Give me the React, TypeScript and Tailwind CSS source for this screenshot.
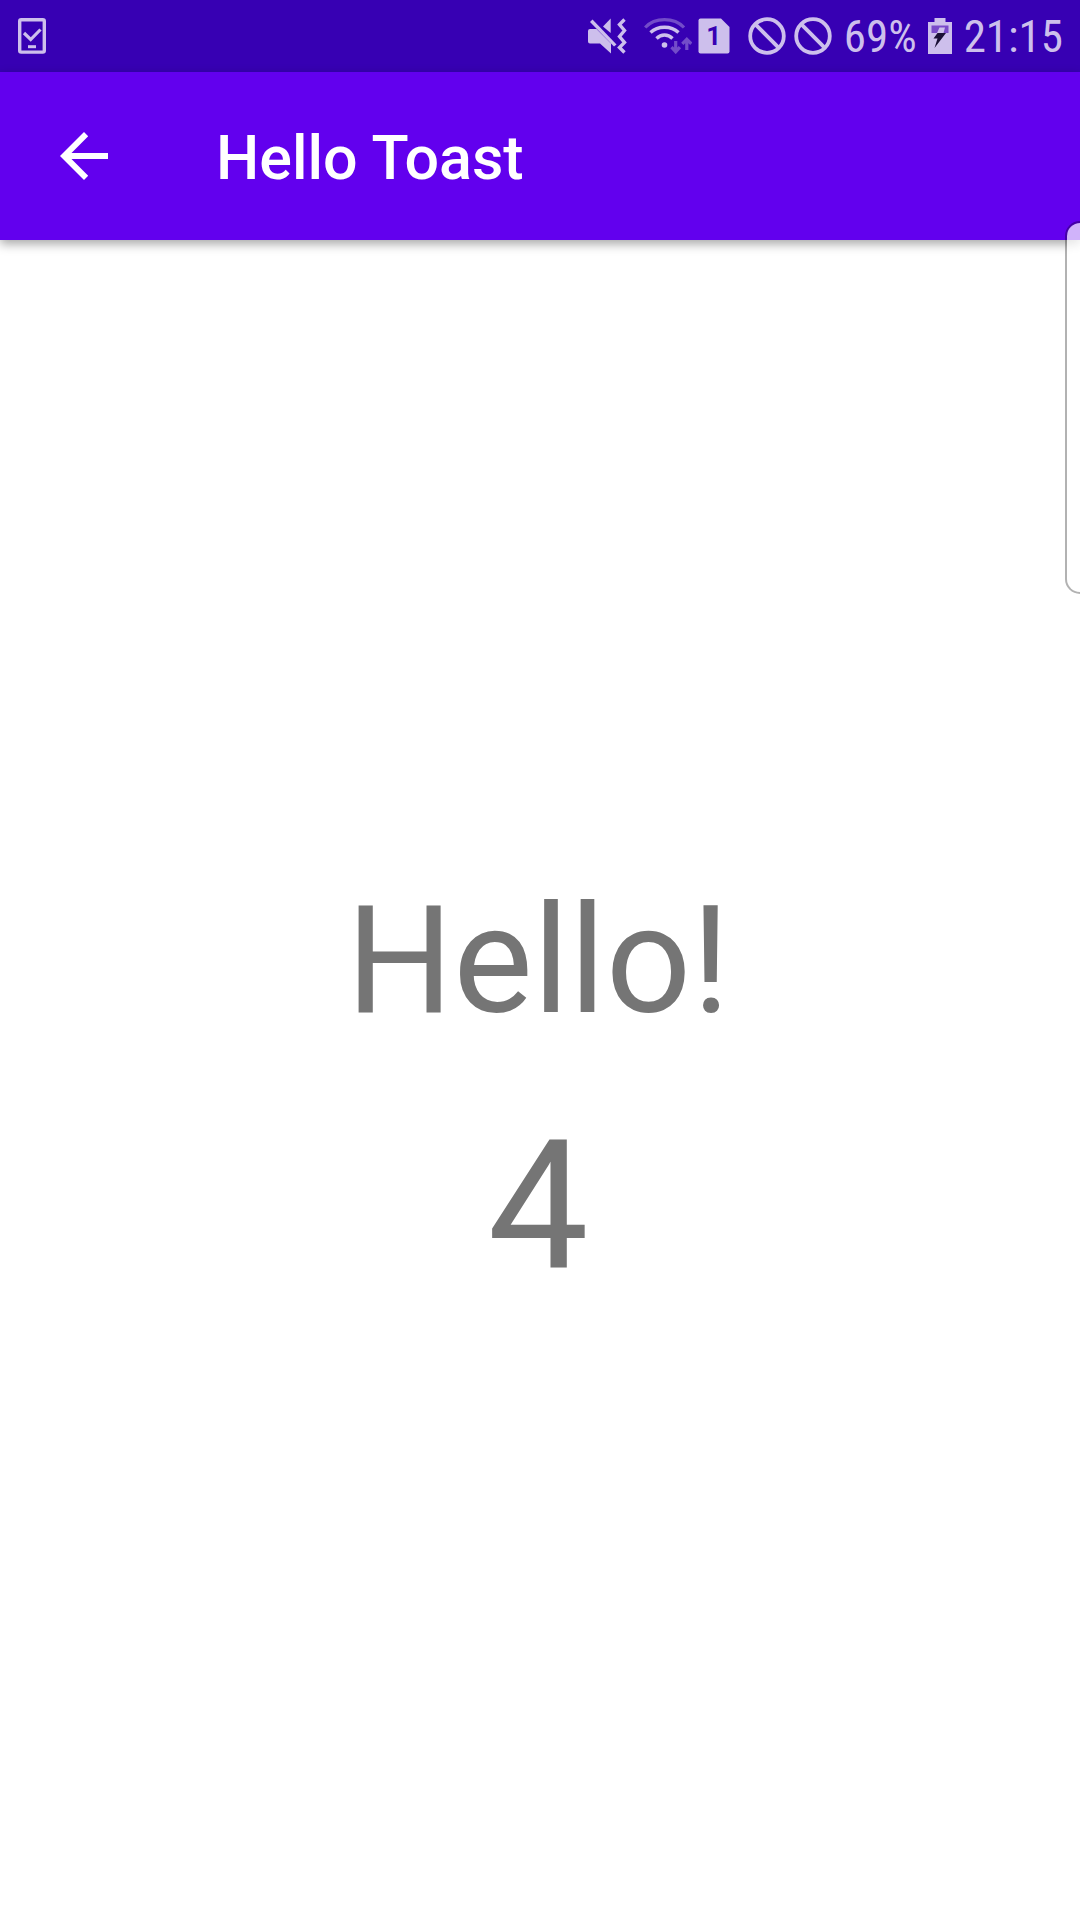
import React from "react";

function TaskIcon() {
  return (
    <svg className="h-9 w-7" viewBox="0 0 28 36" fill="none" stroke="currentColor" aria-hidden="true">
      <rect x="1.7" y="1.7" width="24.6" height="32.4" rx="1.5" strokeWidth="3.4" />
      <path d="M6 15l6.700 6.500L22.500 11.500" strokeWidth="3.2" />
      <path d="M10 28.7h8" strokeWidth="3" />
    </svg>
  );
}

function MuteIcon() {
  return (
    <svg className="h-9 w-10" viewBox="0 0 40 36" aria-hidden="true">
      <g fill="currentColor">
        <path d="M2 11H8.500L23 25.500V35.500L12 25.500H2Q0 25.500 0 23.500V13Q0 11 2 11Z" />
        <path d="M15 8.500L22.700 0.500V15Z" />
        <path d="M4.500 1.500L28.500 26.500L26 28.500L2 4Z" />
      </g>
      <path d="M36.500 1.500L31.500 6.500l5 6-5 6 5 6-5 5 5 5" fill="none" stroke="currentColor" strokeWidth="3.400" />
    </svg>
  );
}

function WifiIcon() {
  return (
    <svg className="h-9 w-12" viewBox="0 0 48 36" fill="none" stroke="currentColor" aria-hidden="true">
      <path d="M1.200 9.500Q8.500 1.700 20.500 1.700T40 9.500" strokeWidth="3.200" opacity="0.4" />
      <path d="M6.500 14.500Q12 9.300 20.500 9.300T34.500 14.500" strokeWidth="3.400" />
      <path d="M12.500 20.500Q16 17 20.500 17T28.500 20.500" strokeWidth="3.400" />
      <circle cx="20.500" cy="27" r="2.800" fill="currentColor" stroke="none" />
      <g strokeWidth="3.200" opacity="0.4">
        <path d="M31.700 23v10.500M27.500 29.200l4.200 4.600 4.200-4.600" />
        <path d="M42.800 32V21.500M38.300 25.800l4.500-4.600 4.500 4.600" />
      </g>
    </svg>
  );
}

function SimIcon() {
  return (
    <span className="relative flex h-9 w-8 items-center justify-center">
      <svg className="h-9 w-8" viewBox="0 0 32 36" aria-hidden="true">
        <path d="M2.500 0.500H23L31.500 9V33.500Q31.500 35.500 29.500 35.500H2.500Q0.500 35.500 0.500 33.500V2.500Q0.500 0.500 2.500 0.500Z" fill="currentColor" />
      </svg>
      <span className="absolute inset-0 text-center text-[26px] leading-9 font-bold text-[#3700b3]">1</span>
    </span>
  );
}

function BlockedIcon() {
  return (
    <svg className="h-[38px] w-[38px]" viewBox="0 0 38 38" fill="none" stroke="currentColor" strokeWidth="3.800" aria-hidden="true">
      <circle cx="19" cy="19" r="16.800" />
      <path d="M7.200 7.200l23.600 23.600" />
    </svg>
  );
}

function BatteryIcon() {
  return (
    <svg className="h-9 w-6" viewBox="0 0 24 36" aria-hidden="true">
      <path d="M6.500 0H17.500V4H24V36H0V4H6.500Z" fill="currentColor" />
      <path d="M3.500 7.500H20.500V15H3.500Z" fill="#7a4bc9" />
      <path d="M11.500 9.500H17L15.500 15H9Z" fill="currentColor" />
      <path d="M9.500 15H18L6.500 30L9.500 20.500H5.500Z" fill="#1b1036" />
    </svg>
  );
}

function StatusBar() {
  return (
    <div className="flex h-[72px] items-center bg-[#3700b3] pr-[17px] pl-[18px] text-[#cdbfec]">
      <TaskIcon />
      <div className="ml-auto flex items-center">
        <MuteIcon />
        <div className="ml-4">
          <WifiIcon />
        </div>
        <div className="ml-1.5">
          <SimIcon />
        </div>
        <div className="ml-[18px] flex gap-2">
          <BlockedIcon />
          <BlockedIcon />
        </div>
        <span className="ml-3 pt-0.5 font-['Roboto_Condensed','Liberation_Sans_Narrow',Roboto,sans-serif] text-[45px] leading-[70px]">69%</span>
        <div className="ml-[11px]">
          <BatteryIcon />
        </div>
        <time className="ml-3 pt-0.5 font-['Roboto_Condensed','Liberation_Sans_Narrow',Roboto,sans-serif] text-[45px] leading-[70px]">21:15</time>
      </div>
    </div>
  );
}

function AppBar() {
  return (
    <header className="relative flex h-[168px] items-center bg-[#6200ee] text-white shadow-[0_4px_10px_rgba(0,0,0,0.35)]">
      <button type="button" aria-label="Navigate up" className="flex h-[168px] w-[168px] items-center justify-center">
        <svg className="h-12 w-12" viewBox="0 0 48 48" fill="currentColor" aria-hidden="true">
          <path d="M48 21H11.500L28.200 4.200L24 0L0 24L24 48L28.200 43.800L11.500 27H48Z" />
        </svg>
      </button>
      <h1 className="ml-12 pt-1 text-[61px] leading-[72px] font-medium">Hello Toast</h1>
    </header>
  );
}

export default function App() {
  return (
    <div className="relative flex min-h-screen flex-col overflow-hidden bg-white font-[Roboto,sans-serif]">
      <StatusBar />
      <AppBar />
      <main className="flex flex-1 flex-col items-center justify-center gap-[52px] pt-6 pr-1 text-[#757575]">
        <p className="text-[150px] leading-[176px]">Hello!</p>
        <p className="text-[180px] leading-[211px]">4</p>
      </main>
      <div className="absolute top-[221px] right-0 h-[373px] w-[15px] rounded-l-[18px] border-2 border-r-0 border-black/30 bg-white/70 bg-clip-padding" />
    </div>
  );
}
